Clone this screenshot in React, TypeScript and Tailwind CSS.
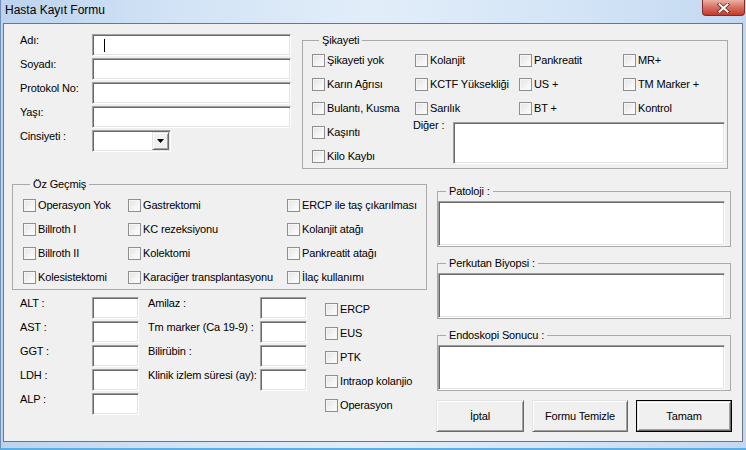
import React from 'react';

const sunken =
  'bg-white border border-t-[#a0a0a0] border-l-[#a0a0a0] border-r-[#ffffff] border-b-[#ffffff] shadow-[inset_1px_1px_0_#696969,inset_-1px_-1px_0_#e3e3e3]';

const raised =
  'bg-[#f0f0f0] border border-t-[#e3e3e3] border-l-[#e3e3e3] border-r-[#696969] border-b-[#696969] shadow-[inset_1px_1px_0_#ffffff,inset_-1px_-1px_0_#a0a0a0]';

const Check = ({ label }: { label: string }) => (
  <div className="flex items-center h-[24px] gap-[2px] whitespace-nowrap">
    <span className="w-[13px] h-[13px] shrink-0 border border-[#8e8f8f] bg-gradient-to-br from-[#e4e4e4] to-[#ffffff] shadow-[inset_0_0_0_1px_#f6f6f6]" />
    <span className="leading-[13px]">{label}</span>
  </div>
);

const Frame = ({
  title,
  className,
  legendClass = 'ml-[7px]',
  children
}: {
  title: string;
  className: string;
  legendClass?: string;
  children: React.ReactNode;
}) => (
  <fieldset className={`border border-[#a9a9a9] ${className}`}>
    <legend className={`${legendClass} px-[3px] leading-[13px]`}>{title}</legend>
    {children}
  </fieldset>
);

const Field = ({ label, labelW, boxW, cursor }: { label: string; labelW: string; boxW: string; cursor?: boolean }) => (
  <div className="flex h-[22px]">
    <span className={`${labelW} leading-[13px] whitespace-nowrap`}>{label}</span>
    <div className={`${boxW} h-[22px] flex items-center pl-[11px] ${sunken}`}>
      {cursor && <span className="w-[1px] h-[13px] bg-black" />}
    </div>
  </div>
);

const Button = ({ label, w, isDefault }: { label: string; w: string; isDefault?: boolean }) =>
  isDefault ? (
    <button className={`${w} h-[32px] border border-black flex`}>
      <span className={`flex-1 flex items-center justify-center ${raised}`}>{label}</span>
    </button>
  ) : (
    <button className={`${w} h-[32px] flex items-center justify-center ${raised}`}>{label}</button>
  );

const TextArea = ({ className }: { className: string }) => <div className={`${className} ${sunken}`} />;

export default function App() {
  return (
    <div className="w-[746px] h-[450px] flex flex-col bg-[linear-gradient(90deg,#bcd3ee_0%,#d3e4f6_25%,#e2edf9_50%,#d4e5f7_75%,#c3d8f0_100%)] border-l border-l-[#6f8fb8] border-b-2 border-b-[#5ab0e6] font-['Liberation_Sans',Arial,sans-serif] text-[11px] text-black tracking-[-0.15px]">
      {/* title bar */}
      <div className="h-[23px] flex items-start justify-between pl-[4px] pr-[1px]">
        <span className="text-[12px] leading-[20px] tracking-normal">Hasta Kayıt Formu</span>
        <div className="w-[43px] h-[16px] rounded-b-[4px] border border-t-0 border-[#7b2f27] bg-gradient-to-b from-[#eab0a3] via-[#d66e5f] to-[#c2392c] flex items-center justify-center">
          <svg width="13" height="10" viewBox="0 0 13 10">
            <path d="M2.5 1.5L10.5 8.5M10.5 1.5L2.5 8.5" stroke="#6a2a22" strokeWidth="3.6" strokeLinecap="square" />
            <path d="M2.5 1.5L10.5 8.5M10.5 1.5L2.5 8.5" stroke="#ffffff" strokeWidth="2" strokeLinecap="square" />
          </svg>
        </div>
      </div>

      {/* client area */}
      <div className="flex-1 flex pl-[2px] pr-[3px] pb-[6px]">
        <div className="flex-1 bg-[#f0f0f0] border border-[#6d7683] flex flex-col">
          {/* top */}
          <div className="flex pt-[10px]">
            <div className="flex flex-col gap-[2px] ml-[16px]">
              <Field label="Adı:" labelW="w-[72px]" boxW="w-[199px]" cursor />
              <Field label="Soyadı:" labelW="w-[72px]" boxW="w-[199px]" />
              <Field label="Protokol No:" labelW="w-[72px]" boxW="w-[199px]" />
              <Field label="Yaşı:" labelW="w-[72px]" boxW="w-[199px]" />
              <div className="flex h-[22px]">
                <span className="w-[72px] leading-[13px]">Cinsiyeti :</span>
                <div className={`w-[79px] h-[22px] flex items-center justify-end pr-[1px] ${sunken}`}>
                  <div className={`w-[17px] h-[18px] flex items-center justify-center ${raised}`}>
                    <svg width="7" height="4" viewBox="0 0 7 4">
                      <path d="M0 0H7L3.5 4Z" fill="#000" />
                    </svg>
                  </div>
                </div>
              </div>
            </div>

            <Frame title="Şikayeti" className="ml-[11px] w-[426px] pl-[9px] pt-[1px]">
              <div className="grid grid-cols-[103px_104px_104px_1fr]">
                {[
                  'Şikayeti yok', 'Kolanjit', 'Pankreatit', 'MR+',
                  'Karın Ağrısı', 'KCTF Yüksekliği', 'US +', 'TM Marker +',
                  'Bulantı, Kusma', 'Sarılık', 'BT +', 'Kontrol'
                ].map((l) => (
                  <Check key={l} label={l} />
                ))}
              </div>
              <div className="flex">
                <div className="w-[103px] flex flex-col">
                  <Check label="Kaşıntı" />
                  <Check label="Kilo Kaybı" />
                </div>
                <span className="-ml-[2px] w-[40px] -mt-[1px] leading-[13px]">Diğer :</span>
                <TextArea className="w-[272px] h-[42px] mt-[2px]" />
              </div>
            </Frame>
          </div>

          {/* bottom */}
          <div className="flex mt-[9px]">
            <div className="ml-[8px] w-[415px] flex flex-col">
              <Frame title="Öz Geçmiş" className="w-[415px] pl-[10px] pt-[2px]">
                <div className="grid grid-cols-[105px_159px_1fr]">
                  {[
                    'Operasyon Yok', 'Gastrektomi', 'ERCP ile taş çıkarılması',
                    'Billroth I', 'KC rezeksiyonu', 'Kolanjit atağı',
                    'Billroth II', 'Kolektomi', 'Pankreatit atağı',
                    'Kolesistektomi', 'Karaciğer transplantasyonu', 'İlaç kullanımı'
                  ].map((l) => (
                    <Check key={l} label={l} />
                  ))}
                </div>
              </Frame>

              <div className="flex mt-[7px]">
                <div className="ml-[8px] flex flex-col gap-[2px]">
                  {['ALT :', 'AST :', 'GGT :', 'LDH :', 'ALP :'].map((l) => (
                    <Field key={l} label={l} labelW="w-[72px]" boxW="w-[47px]" />
                  ))}
                </div>
                <div className="ml-[9px] flex flex-col gap-[2px]">
                  {['Amilaz :', 'Tm marker (Ca 19-9) :', 'Bilirübin :', 'Klinik izlem süresi (ay):'].map((l) => (
                    <Field key={l} label={l} labelW="w-[112px]" boxW="w-[47px]" />
                  ))}
                </div>
                <div className="ml-[18px] flex flex-col">
                  {['ERCP', 'EUS', 'PTK', 'Intraop kolanjio', 'Operasyon'].map((l) => (
                    <Check key={l} label={l} />
                  ))}
                </div>
              </div>
            </div>

            <div className="ml-[9px] w-[296px] flex flex-col pt-[7px]">
              <Frame title="Patoloji :" className="ml-[1px] w-[294px]" legendClass="ml-[8px]">
                <TextArea className="w-[287px] h-[45px] mt-[3px]" />
              </Frame>
              <Frame title="Perkutan Biyopsi :" className="ml-[1px] w-[294px] mt-[10px]" legendClass="ml-[8px]">
                <TextArea className="w-[287px] h-[45px] mt-[3px]" />
              </Frame>
              <Frame title="Endoskopi Sonucu :" className="ml-[1px] w-[294px] mt-[10px]" legendClass="ml-[8px]">
                <TextArea className="w-[287px] h-[45px] mt-[3px]" />
              </Frame>
              <div className="flex gap-[8px] mt-[9px]">
                <Button label="İptal" w="w-[88px]" />
                <Button label="Formu Temizle" w="w-[96px]" />
                <Button label="Tamam" w="w-[96px]" isDefault />
              </div>
            </div>
          </div>
        </div>
      </div>
    </div>
  );
}
